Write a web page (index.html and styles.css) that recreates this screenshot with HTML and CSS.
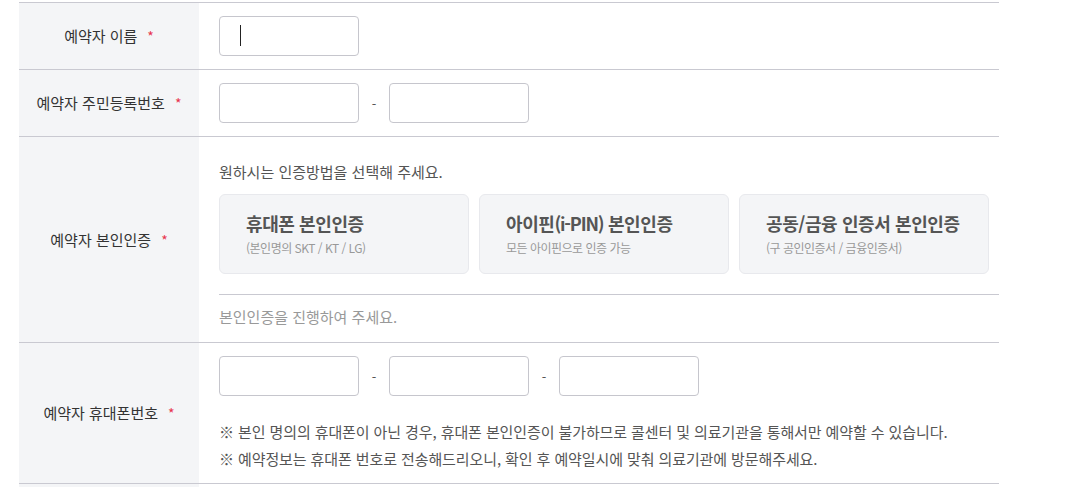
FILE: index.html
```html
<!DOCTYPE html>
<html lang="ko">
<head>
<meta charset="utf-8">
<link rel="stylesheet" href="styles.css">
</head>
<body>
<div class="form">
  <div class="row">
    <div class="th">예약자 이름<span class="req">*</span></div>
    <div class="td td-basic">
      <div class="field"><span class="input"></span><span class="caret"></span></div>
    </div>
  </div>
  <div class="row">
    <div class="th">예약자 주민등록번호<span class="req">*</span></div>
    <div class="td td-basic">
      <div class="field"><span class="input"></span></div>
      <span class="dash">-</span>
      <div class="field"><span class="input"></span></div>
    </div>
  </div>
  <div class="row">
    <div class="th">예약자 본인인증<span class="req">*</span></div>
    <div class="td td-auth">
      <p class="desc">원하시는 인증방법을 선택해 주세요.</p>
      <div class="cards">
        <div class="card"><div class="card-title">휴대폰 본인인증</div><div class="card-sub">(본인명의 SKT / KT / LG)</div></div>
        <div class="card"><div class="card-title">아이핀<span class="latin">(i-PIN)</span> 본인인증</div><div class="card-sub">모든 아이핀으로 인증 가능</div></div>
        <div class="card"><div class="card-title">공동/금융 인증서 본인인증</div><div class="card-sub">(구 공인인증서 / 금융인증서)</div></div>
      </div>
      <div class="status">본인인증을 진행하여 주세요.</div>
    </div>
  </div>
  <div class="row">
    <div class="th">예약자 휴대폰번호<span class="req">*</span></div>
    <div class="td td-phone">
      <div class="inputs">
        <div class="field"><span class="input"></span></div>
        <span class="dash">-</span>
        <div class="field"><span class="input"></span></div>
        <span class="dash">-</span>
        <div class="field"><span class="input"></span></div>
      </div>
      <ul class="notes">
        <li>※ 본인 명의의 휴대폰이 아닌 경우, 휴대폰 본인인증이 불가하므로 콜센터 및 의료기관을 통해서만 예약할 수 있습니다.</li>
        <li>※ 예약정보는 휴대폰 번호로 전송해드리오니, 확인 후 예약일시에 맞춰 의료기관에 방문해주세요.</li>
      </ul>
    </div>
  </div>
  <div class="row row-tail">
    <div class="th"></div>
    <div class="td"></div>
  </div>
</div>
</body>
</html>
```
FILE: styles.css
```css
* { box-sizing: border-box; }
html, body { margin: 0; padding: 0; background: #fff; }
body {
  font-family: "Noto Sans CJK KR", "Noto Sans", sans-serif;
  font-size: 15px;
  color: #333;
  overflow: hidden;
}
.form {
  width: 980px;
  margin: 2px 0 0 19px;
  border-top: 1px solid #c9c9d1;
}
.row {
  display: grid;
  grid-template-columns: 180px 800px;
  border-bottom: 1px solid #c9c9d1;
}
.row-tail { border-bottom: none; height: 10px; }
.th {
  background: #f4f5f7;
  display: flex;
  align-items: center;
  justify-content: center;
  color: #333;
  line-height: 20px;
}
.req {
  color: #e8344e;
  margin-left: 10px;
  font-size: 14px;
}
.td { padding-left: 20px; }
.td-basic {
  display: flex;
  align-items: center;
  padding-top: 13px;
  padding-bottom: 13px;
}
.field { position: relative; }
.input {
  display: block;
  width: 140px;
  height: 40px;
  border: 1px solid #c6c6cd;
  border-radius: 4px;
  background: #fff;
}
.caret {
  position: absolute;
  left: 21px;
  top: 9px;
  width: 1px;
  height: 21px;
  background: #222;
}
.dash {
  width: 30px;
  text-align: center;
  color: #555;
  font-size: 13px;
}
.td-auth { padding-top: 25px; padding-bottom: 15px; }
.desc {
  margin: 0;
  line-height: 20px;
  color: #555;
}
.cards {
  display: flex;
  gap: 10.5px;
  margin-top: 12px;
}
.card {
  width: 249.5px;
  height: 80px;
  background: #f4f5f7;
  border: 1px solid #e8e9ed;
  border-radius: 6px;
  padding: 15px 0 0 26px;
}
.card-title {
  font-size: 18px;
  font-weight: 700;
  color: #555;
  line-height: 26px;
  letter-spacing: -0.4px;
}
.latin { letter-spacing: -1.2px; }
.card-sub {
  font-size: 12px;
  color: #999;
  line-height: 18px;
  margin-top: 3px;
  letter-spacing: -0.5px;
}
.status {
  margin-top: 20px;
  border-top: 1px solid #c9c9d1;
  padding-top: 12px;
  line-height: 20px;
  color: #999;
}
.td-phone { padding-top: 13px; padding-bottom: 11px; }
.inputs { display: flex; align-items: center; }
.notes {
  list-style: none;
  margin: 22px 0 0;
  padding: 0;
  color: #555;
  line-height: 27px;
  letter-spacing: -0.1px;
}
```
